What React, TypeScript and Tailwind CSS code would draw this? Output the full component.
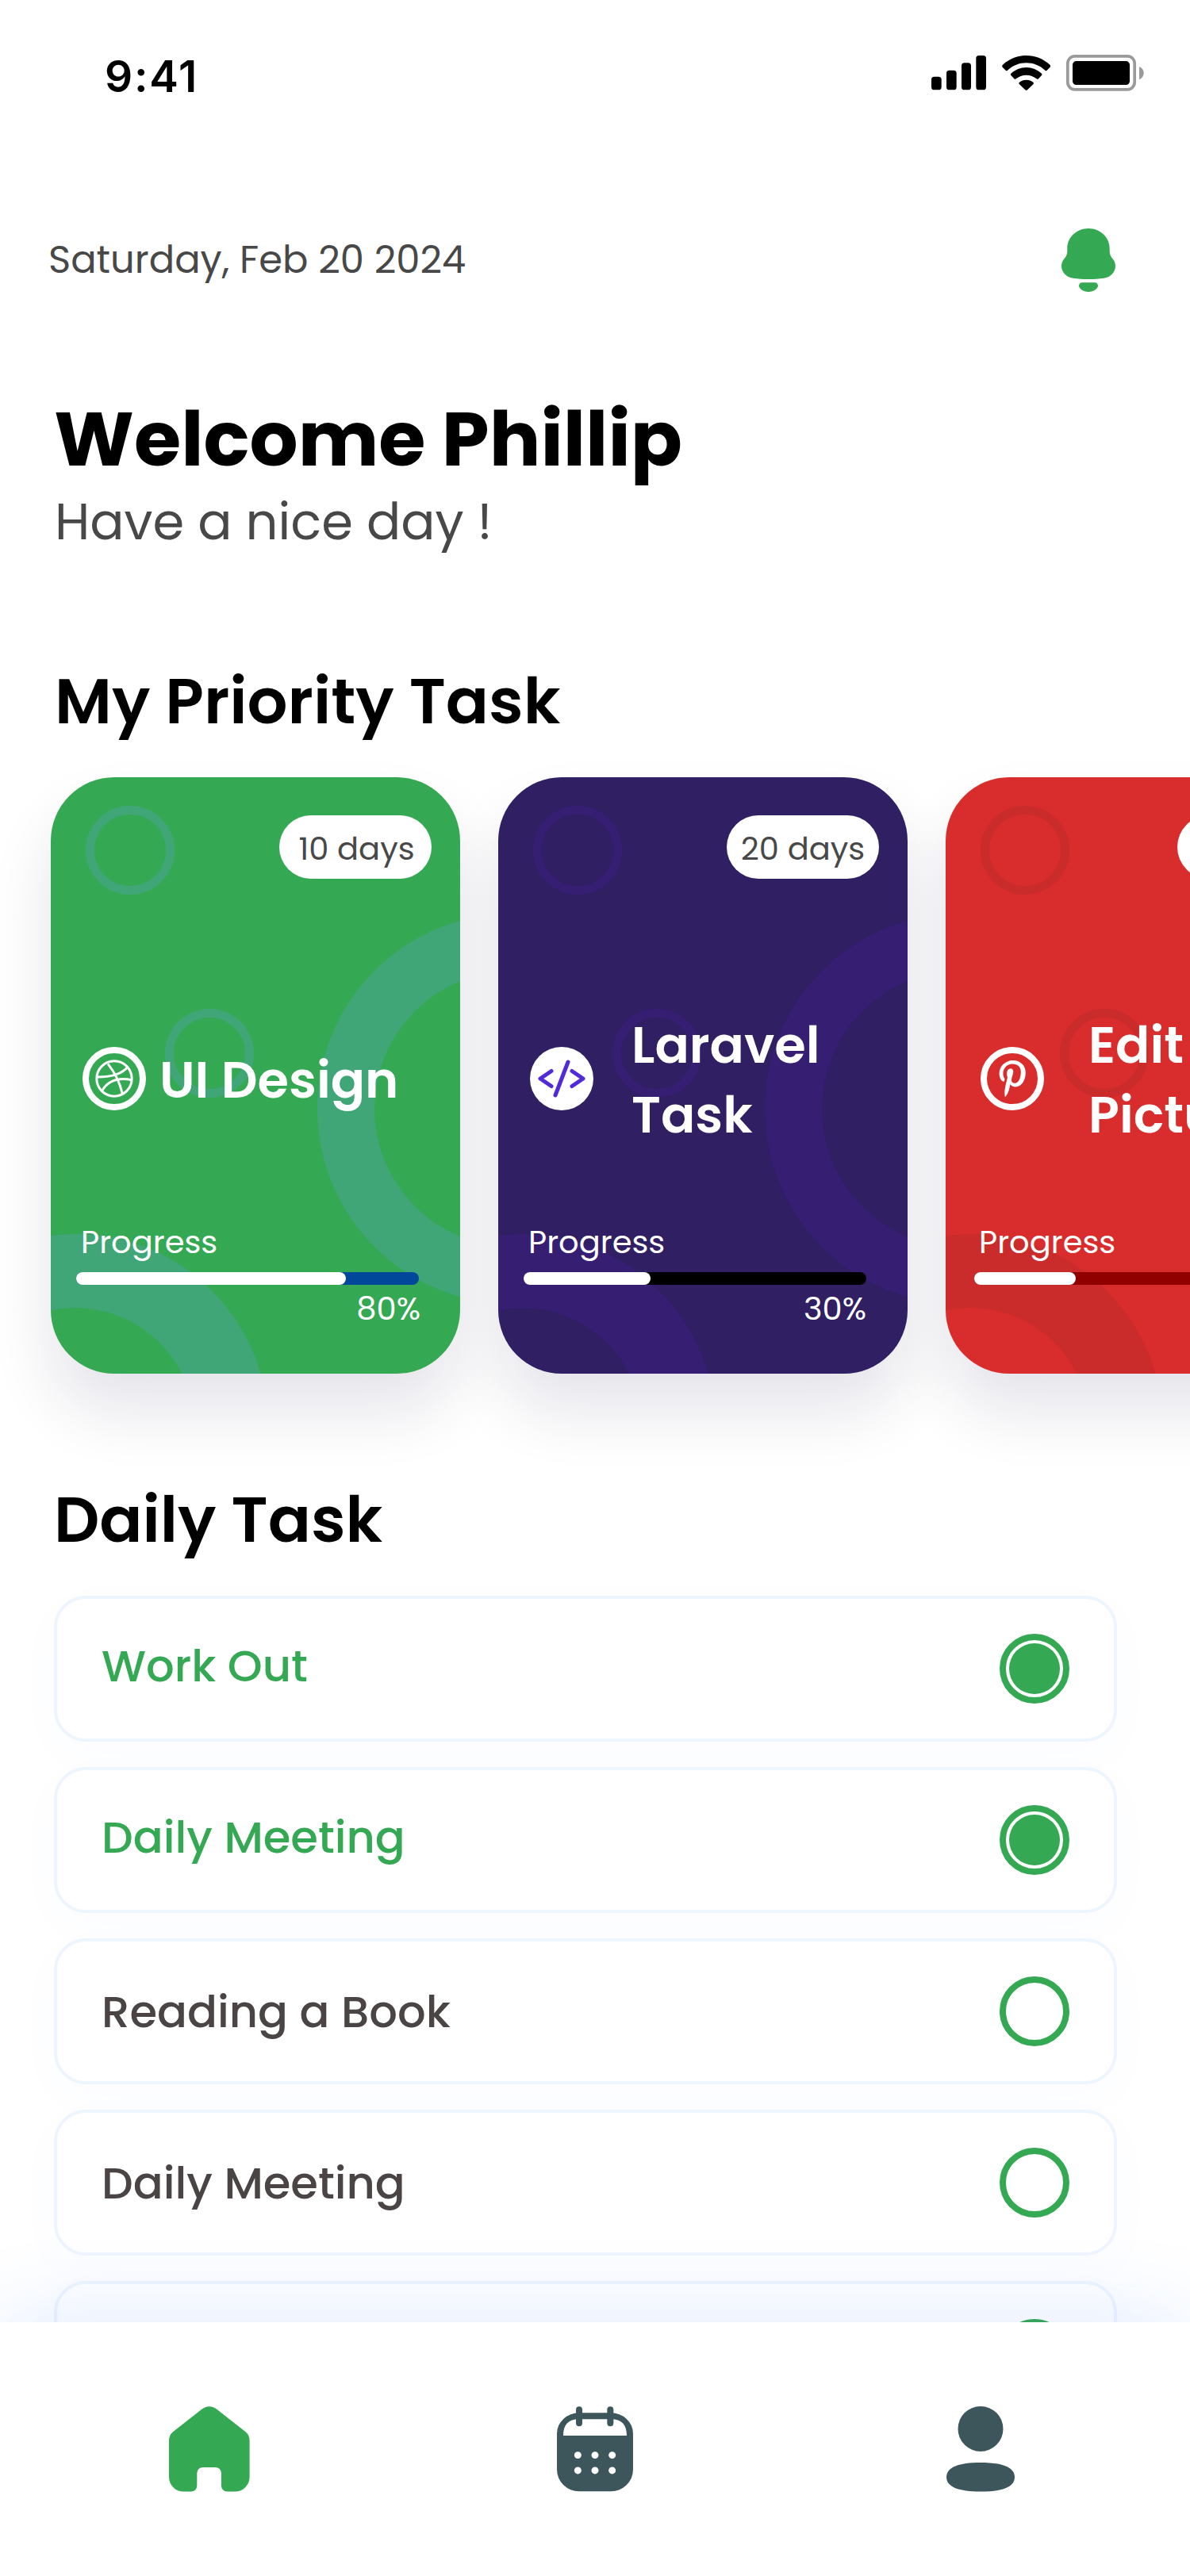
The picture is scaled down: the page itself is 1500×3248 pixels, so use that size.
import type { ReactNode } from "react";

type Task = {
  title: string[];
  days: string;
  percent: number;
  icon: ReactNode;
  card: string;
  ring: string;
  track: string;
  pill: string;
  head: string;
  titleBox: string;
  progress: string;
  inset: string;
  bar: string;
  value: string;
};

function SignalIcon() {
  return (
    <svg className="h-[43.3px] w-[69px]" viewBox="42 61 207 130">
      <rect x="42" y="141" width="38" height="50" rx="11" />
      <rect x="99" y="117" width="38" height="74" rx="11" />
      <rect x="156" y="89" width="36" height="102" rx="11" />
      <rect x="211" y="61" width="38" height="130" rx="11" />
    </svg>
  );
}

function WifiIcon() {
  return (
    <svg className="h-[44.3px] w-[61.3px]" viewBox="308 57 184 133">
      <path d="M400 57C434 57 466 70 490 93Q493 97 490 101L478 113Q475 116 471 113C451 95 427 85 400 85S349 95 329 113Q325 116 322 113L310 101Q307 97 310 93C334 70 366 57 400 57Z" />
      <path d="M400 102C422 102 442 111 458 125Q461 129 458 132L446 145Q442 148 439 145C428 136 415 131 400 131S372 136 361 145Q358 148 354 145L342 132Q339 129 342 125C358 111 378 102 400 102Z" />
      <path d="M400 149C410 149 419 152 426 158Q430 162 426 166L404 187Q400 191 396 187L374 166Q370 162 374 158C381 152 390 149 400 149Z" />
    </svg>
  );
}

function BatteryIcon() {
  return (
    <svg className="h-[45.7px] w-[98px]" viewBox="552 57 294 137">
      <rect x="557.5" y="62.5" width="253" height="126" rx="27" fill="none" stroke="#9a9a9a" strokeWidth="11" />
      <rect x="576" y="81" width="216" height="90" rx="14" />
      <path fill="#9a9a9a" d="M828 102C840 107 845 117 845 126S840 146 828 151Z" />
    </svg>
  );
}

function BellIcon() {
  return (
    <svg className="h-20 w-[68px]" viewBox="0 0 68 80" fill="#35a853">
      <path d="M34 0C19.5 0 7.3 11 7.3 25V29C7.3 32 6 35.5 3.7 38C1.5 40.5 0 43.5 0 47.5C0 55 6 61.5 14.5 62.8C20.5 63.7 27 64 34 64S47.5 63.7 53.5 62.8C62 61.5 68 55 68 47.5C68 43.5 66.5 40.5 64.3 38C62 35.5 60.7 32 60.7 29V25C60.7 11 48.5 0 34 0Z" />
      <path d="M26 68.3H42C44.5 68.3 46 70 46 72.3C46 75.8 40.5 80 34 80S22 75.8 22 72.3C22 70 23.5 68.3 26 68.3Z" />
    </svg>
  );
}

function DribbbleIcon() {
  return (
    <svg className="size-20" viewBox="30 30 240 240" fill="none" stroke="#fff">
      <circle cx="150" cy="150" r="108" strokeWidth="24" />
      <g strokeWidth="9">
        <circle cx="150" cy="150" r="66.5" />
        <path d="M126 94C154 129 171 164 181 207" />
        <path d="M86 144C132 144 180 134 202 104" />
        <path d="M105 194C132 150 180 148 216 155" />
      </g>
    </svg>
  );
}

function CodeIcon() {
  return (
    <svg className="size-20" viewBox="0 0 80 80" fill="none" strokeLinecap="round" strokeLinejoin="round">
      <circle cx="40" cy="40" r="40" fill="#fff" />
      <g stroke="#512bd9" strokeWidth="5">
        <path d="M27 30.5L13 40L27 49.5" />
        <path d="M53 30.5L67 40L53 49.5" />
        <path d="M48 19L32 61" />
      </g>
    </svg>
  );
}

function PinterestIcon() {
  return (
    <svg className="size-20" viewBox="0 0 80 80">
      <circle cx="40" cy="40" r="36" fill="none" stroke="#fff" strokeWidth="8" />
      <g transform="translate(23.6 16.4) scale(0.0865 0.0925)">
        <path
          fill="#fff"
          d="M204 6.5C101.4 6.5 0 74.9 0 185.6 0 256 39.6 296 63.600 296c9.900 0 15.600-27.600 15.600-35.400 0-9.300-23.700-29.100-23.700-67.800 0-80.400 61.200-137.400 140.400-137.400 68.100 0 118.500 38.700 118.500 109.800 0 53.100-21.300 152.700-90.300 152.700-24.900 0-46.200-18-46.200-43.800 0-37.800 26.400-74.400 26.400-113.400 0-66.200-93.900-54.200-93.900 25.800 0 16.800 2.100 35.400 9.600 50.700-13.800 59.400-42 147.900-42 209.100 0 18.900 2.700 37.500 4.500 56.400 3.400 3.800 1.700 3.400 6.900 1.500 50.400-69 48.600-82.500 71.400-172.800 12.300 23.400 44.100 36 69.300 36 106.200 0 153.900-103.500 153.900-196.800C384 71.300 298.200 6.500 204 6.500z"
        />
      </g>
    </svg>
  );
}

function HomeIcon() {
  return (
    <svg className="h-[107.6px] w-[101.6px]" viewBox="70 132 305 323" fill="#35a853">
      <path d="M192 145Q222 120 253 145L360 229Q375 242 375 262V400A55 55 0 0 1 320 455H290A22 22 0 0 1 268 433V385A22 22 0 0 0 246 363H198A22 22 0 0 0 176 385V433A22 22 0 0 1 154 455H125A55 55 0 0 1 70 400V262Q70 242 85 229Z" />
    </svg>
  );
}

function CalendarIcon() {
  return (
    <svg className="h-[107.6px] w-24" viewBox="96 132 288 323" fill="#3d565b">
      <path
        fillRule="evenodd"
        d="M180 157H300A84 78 0 0 1 384 235V372A84 82 0 0 1 300 454H180A84 82 0 0 1 96 372V235A84 78 0 0 1 180 157ZM120 243H360C360 203 342 181 300 181H180C138 181 120 203 120 243Z"
      />
      <rect x="168" y="133" width="24" height="75" rx="12" />
      <rect x="286" y="133" width="24" height="75" rx="12" />
      <g fill="#fff">
        <circle cx="175" cy="317" r="13.5" />
        <circle cx="240" cy="317" r="13.5" />
        <circle cx="305" cy="317" r="13.5" />
        <circle cx="175" cy="375" r="13.5" />
        <circle cx="240" cy="375" r="13.5" />
        <circle cx="305" cy="375" r="13.5" />
      </g>
    </svg>
  );
}

function ProfileIcon() {
  return (
    <svg className="h-[107.6px] w-[86px]" viewBox="99 132 258 323" fill="#3d565b">
      <circle cx="228" cy="217.500" r="85.500" />
      <path d="M228 345C310 345 357 362 357 400S310 455 228 455S99 438 99 400S146 345 228 345Z" />
    </svg>
  );
}

const tasks: Task[] = [
  {
    title: ["UI Design"],
    days: "10 days",
    percent: 80,
    icon: <DribbbleIcon />,
    card: "bg-[#35a853]",
    ring: "stroke-[#41a677]",
    track: "bg-[#01479a]",
    pill: "mr-9 pl-[3px]",
    head: "pl-10",
    titleBox: "ml-[17px]",
    progress: "pl-[38px]",
    inset: "ml-8",
    bar: "w-[340px]",
    value: "pr-[50px]",
  },
  {
    title: ["Laravel", "Task"],
    days: "20 days",
    percent: 30,
    icon: <CodeIcon />,
    card: "bg-[#301f63]",
    ring: "stroke-[#361f72]",
    track: "bg-black",
    pill: "mr-9",
    head: "pl-10",
    titleBox: "ml-12",
    progress: "pl-[38px]",
    inset: "ml-8",
    bar: "w-40",
    value: "pr-[52px]",
  },
  {
    title: ["Edit", "Picture"],
    days: "12 days",
    percent: 30,
    icon: <PinterestIcon />,
    card: "bg-[#d92d2d]",
    ring: "stroke-[#ca2c2c]",
    track: "bg-[#900000]",
    pill: "mr-8",
    head: "pl-11",
    titleBox: "ml-14",
    progress: "pl-[42px]",
    inset: "ml-9",
    bar: "w-32",
    value: "pr-12",
  },
];

function PriorityCard({ task }: { task: Task }) {
  return (
    <article
      className={`relative h-[752px] w-[516px] shrink-0 overflow-hidden rounded-[80px] text-white ${task.card}`}
    >
      <svg className={`absolute inset-0 fill-none ${task.ring}`} viewBox="0 0 516 752">
        <circle cx="100" cy="92" r="50.5" strokeWidth="11" />
        <circle cx="200" cy="348" r="50.5" strokeWidth="11" />
        <circle cx="582" cy="418" r="210" strokeWidth="72" />
        <circle cx="31" cy="819" r="196.5" strokeWidth="93" />
      </svg>
      <div className="relative flex flex-col pt-12">
        <div
          className={`flex h-20 w-48 items-center justify-center self-end rounded-full bg-white pt-1 text-[40px] whitespace-nowrap text-[#484848] ${task.pill}`}
        >
          {task.days}
        </div>
        <div className={`mt-[164px] flex h-44 items-center ${task.head}`}>
          {task.icon}
          <h3 className={`pt-[3px] text-[64px] leading-[88px] font-semibold whitespace-nowrap ${task.titleBox}`}>
            {task.title.map((line) => (
              <span key={line} className="block">
                {line}
              </span>
            ))}
          </h3>
        </div>
        <p className={`mt-[94px] text-[40px] leading-[48px] ${task.progress}`}>Progress</p>
        <div className={`mt-[14px] flex h-4 w-[432px] rounded-full ${task.track} ${task.inset}`}>
          <div className={`rounded-full bg-white ${task.bar}`} />
        </div>
        <p className={`mt-[6px] text-right text-[40px] leading-[48px] ${task.value}`}>{task.percent}%</p>
      </div>
    </article>
  );
}

function Checkbox({ done }: { done: boolean }) {
  return (
    <span className="flex size-[88px] items-center justify-center rounded-full border-8 border-[#35a853]">
      {done && <span className="size-16 rounded-full bg-[#35a853]" />}
    </span>
  );
}

const daily = [
  { label: "Work Out", done: true },
  { label: "Daily Meeting", done: true },
  { label: "Reading a Book", done: false },
  { label: "Daily Meeting", done: false },
  { label: "", done: false },
];

export default function App() {
  return (
    <div className="flex h-[3248px] w-[1500px] flex-col overflow-hidden bg-white font-[Poppins,Inter,sans-serif] text-black">
      <main className="min-h-0 flex-1 overflow-hidden">
        <div className="flex h-[184px] items-center justify-between pr-[58px] pl-[132px]">
          <time className="mt-[9px] font-[Inter,sans-serif] text-[55px] leading-none font-semibold tracking-[1.8px]">
            9:41
          </time>
          <div className="flex items-center gap-5">
            <SignalIcon />
            <WifiIcon />
            <BatteryIcon />
          </div>
        </div>

        <div className="mt-[104px] flex h-20 items-center justify-between pr-[94px] pl-[61px]">
          <p className="text-[48px] leading-[80px] text-[#484848]">Saturday, Feb 20 2024</p>
          <BellIcon />
        </div>

        <h1 className="mt-[138px] pl-[68px] text-[96px] leading-[96px] font-bold">Welcome Phillip</h1>
        <p className="mt-2 pl-[69px] text-[64px] leading-[96px] text-[#484848]">Have a nice day !</p>

        <h2 className="mt-[138px] pl-[69px] text-[80px] leading-[80px] font-semibold">My Priority Task</h2>
        <div className="mt-14 flex gap-12 pl-16">
          {tasks.map((task) => (
            <div key={task.days} className="rounded-[80px] shadow-[0_48px_80px_rgba(20,10,60,0.11)]">
              <PriorityCard task={task} />
            </div>
          ))}
        </div>

        <h2 className="mt-36 pl-[68px] text-[80px] leading-[80px] font-semibold">Daily Task</h2>
        <ul className="mt-14 flex flex-col gap-8 pr-[92px] pl-[68px]">
          {daily.map((item, i) => (
            <li
              key={i}
              className="flex h-[184px] items-center justify-between rounded-[40px] border-4 border-[#eff5fe] bg-white px-14 shadow-[0_16px_60px_rgba(80,110,255,0.025)]"
            >
              <span
                className={
                  item.done
                    ? "pb-[7px] text-[56px] font-medium text-[#35a853]"
                    : "pt-px text-[56px] font-medium text-[#4a4444]"
                }
              >
                {item.label}
              </span>
              <Checkbox done={item.done} />
            </li>
          ))}
        </ul>
      </main>

      <nav className="relative flex h-80 shrink-0 items-center justify-between bg-white px-[204px] shadow-[0_-8px_100px_rgba(60,130,245,0.14)]">
        <a className="flex w-30 justify-center">
          <HomeIcon />
        </a>
        <a className="flex w-30 justify-center">
          <CalendarIcon />
        </a>
        <a className="flex w-30 justify-center">
          <ProfileIcon />
        </a>
      </nav>
    </div>
  );
}
